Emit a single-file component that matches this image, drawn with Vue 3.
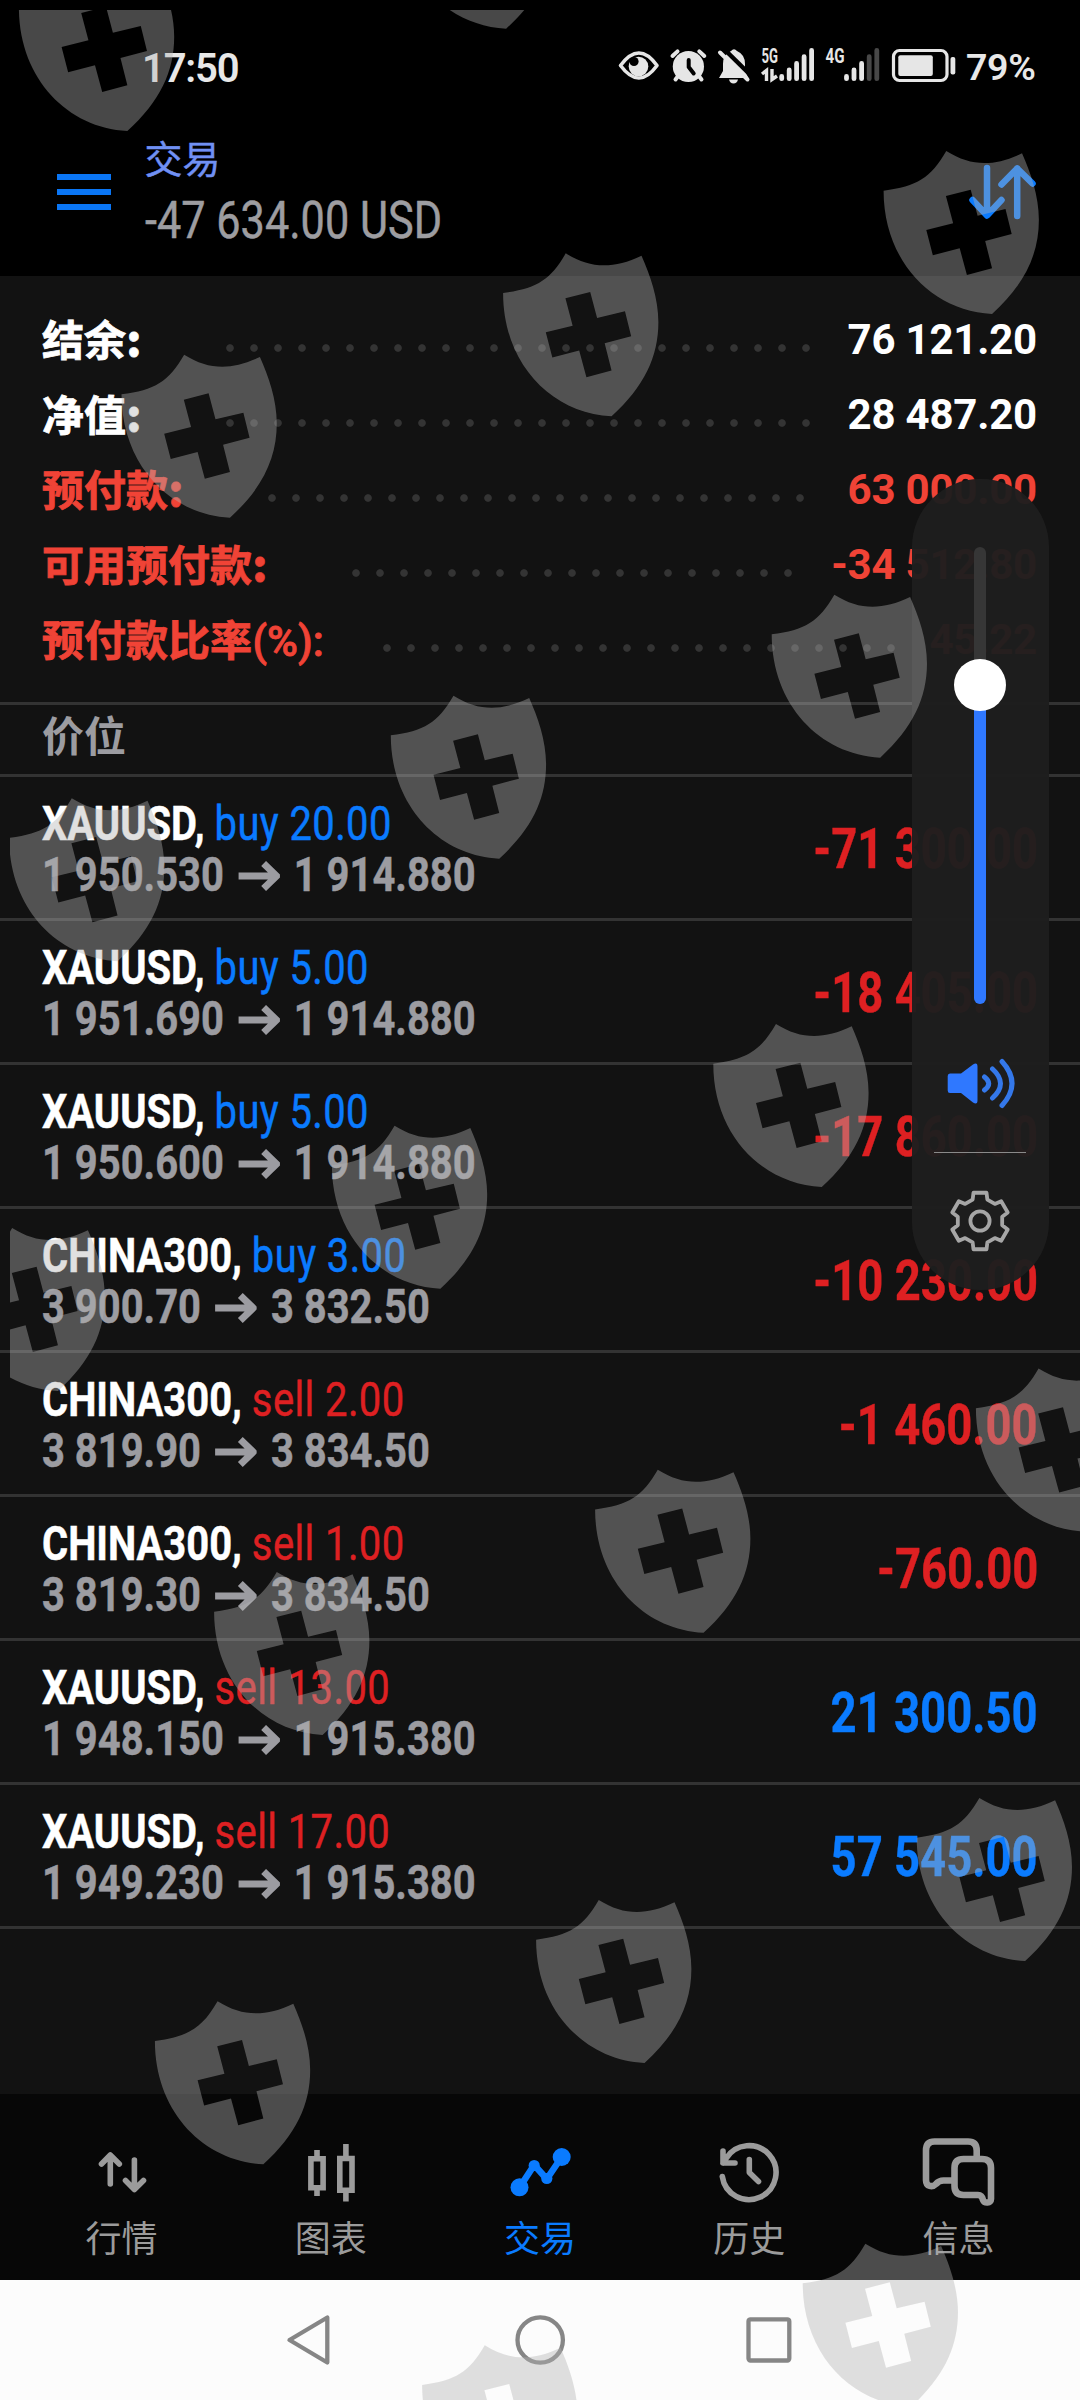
<script setup>
const summary = [
  { label: '结余', tail: ':', value: '76 121.20', lead: 176, dots: 25 },
  { label: '净值', tail: ':', value: '28 487.20', lead: 176, dots: 25 },
  { label: '预付款', tail: ':', value: '63 000.00', lead: 218, dots: 23, warn: true },
  { label: '可用预付款', tail: ':', value: '-34 512.80', lead: 302, dots: 19, warn: true },
  { label: '预付款比率', tail: '(%):', latin: true, value: '45.22', lead: 333, dots: 22, warn: true },
]

const positions = [
  { symbol: 'XAUUSD,', side: 'buy', volume: '20.00', open: '1 950.530', now: '1 914.880', profit: '-71 300.00' },
  { symbol: 'XAUUSD,', side: 'buy', volume: '5.00', open: '1 951.690', now: '1 914.880', profit: '-18 405.00' },
  { symbol: 'XAUUSD,', side: 'buy', volume: '5.00', open: '1 950.600', now: '1 914.880', profit: '-17 860.00' },
  { symbol: 'CHINA300,', side: 'buy', volume: '3.00', open: '3 900.70', now: '3 832.50', profit: '-10 230.00' },
  { symbol: 'CHINA300,', side: 'sell', volume: '2.00', open: '3 819.90', now: '3 834.50', profit: '-1 460.00' },
  { symbol: 'CHINA300,', side: 'sell', volume: '1.00', open: '3 819.30', now: '3 834.50', profit: '-760.00' },
  { symbol: 'XAUUSD,', side: 'sell', volume: '13.00', open: '1 948.150', now: '1 915.380', profit: '21 300.50' },
  { symbol: 'XAUUSD,', side: 'sell', volume: '17.00', open: '1 949.230', now: '1 915.380', profit: '57 545.00' },
]

// Watermark shields, anchored on the upper-left horn
const shields = [
  [81.6, -32], [460.4, -134.3], [946.3, 151], [565.8, 253.3], [184.2, 354.7],
  [834.4, 594.7], [453.5, 695.7], [71.8, 798.3], [776, 1024], [394.6, 1125.7],
  [12.2, 1228], [1038.6, 1368.6], [657.8, 1469.8], [276.8, 1572], [979.4, 1798],
  [598.8, 1900], [217.6, 2001.3], [865.4, 2243.7], [484.8, 2345.3],
]

const polar = (deg, r) => {
  const a = (deg * Math.PI) / 180
  return `${(r * Math.cos(a)).toFixed(2)},${(r * Math.sin(a)).toFixed(2)}`
}
const gear = [30, 90, 150, 210, 270, 330]
  .flatMap((t) => [polar(t - 19, 22.6), polar(t - 13, 29), polar(t + 13, 29), polar(t + 19, 22.6)])
  .join(' ')
</script>

<template>
  <div class="screen">
    <header class="top">
      <div class="status">
        <span class="clock">17:50</span>
        <svg class="status-icons" viewBox="616 36 342 60" width="342" height="60">
          <path d="M620.5 65.5Q639 40.5 657 65.5Q639 90.5 620.5 65.5Z" fill="none" stroke="#e6e6e6" stroke-width="3.6" stroke-linejoin="round" />
          <circle cx="638.5" cy="66.5" r="9.8" fill="#e6e6e6" />
          <circle cx="634" cy="61.5" r="4.6" fill="#000" />
          <circle cx="688.4" cy="66.5" r="15.6" fill="#e6e6e6" />
          <path d="M672.5 56l5-4.600M704.300 56l-5-4.600M675.500 79.500l3-4M701.500 79.500l-3-4" stroke="#e6e6e6" stroke-width="4" stroke-linecap="round" />
          <path d="M688.700 60v7l5 6.500" fill="none" stroke="#000" stroke-width="4" stroke-linecap="round" stroke-linejoin="round" />
          <path d="M731 51q3-3.500 6 0q8 3.500 8 13v7l3.500 7H719l4-7v-7q0-9.500 8-13Z" fill="#e6e6e6" />
          <path d="M729 79.500h9q-1 4-4.500 4t-4.500-4Z" fill="#e6e6e6" />
          <path d="M722 47L753 77.500" stroke="#000" stroke-width="4.500" />
          <path d="M720 52.500L747.500 79.500" stroke="#e6e6e6" stroke-width="4" stroke-linecap="round" />
          <text x="761.500" y="62.600" textLength="16.500" lengthAdjust="spacingAndGlyphs" class="net">5G</text>
          <text x="825.500" y="62.600" textLength="19" lengthAdjust="spacingAndGlyphs" class="net">4G</text>
          <path d="M762 74l4.500-3.500V81M772 69v10.500l5-3.500" fill="none" stroke="#e6e6e6" stroke-width="3.400" />
          <g stroke="#e6e6e6" stroke-width="4.800" stroke-linecap="round">
            <path d="M781.700 76.500V78.700M789.200 70V78.700M796.600 63.500V78.700M804.100 56.700V78.700M811.600 50.500V78.700" />
            <path d="M846.500 76.500V78.700M854 70V78.700M861.600 63.500V78.700" />
            <path d="M869.200 56.700V78.700M876.800 50.500V78.700" stroke="#484848" />
          </g>
          <rect x="893.500" y="50.500" width="53.500" height="30" rx="6" fill="none" stroke="#e6e6e6" stroke-width="3.200" />
          <rect x="898.300" y="55.200" width="34.500" height="20.700" rx="2" fill="#e6e6e6" />
          <rect x="950.500" y="57" width="4.800" height="17.500" rx="2" fill="#e6e6e6" />
        </svg>
        <span class="battery">79%</span>
      </div>
      <div class="appbar">
        <div class="menu"><i></i><i></i><i></i></div>
        <div class="titles">
          <div class="title">交易</div>
          <div class="balance">-47 634.00 USD</div>
        </div>
        <svg class="sort" viewBox="966 160 72 64" width="72" height="64">
          <path d="M987 168V215M972.500 200L987 215.500L1001.500 200M1017.200 216V168.500M1001.500 184.500L1017.200 168.500L1032.500 183.500" fill="none" stroke="#0a7bff" stroke-width="6.500" stroke-linecap="round" stroke-linejoin="round" />
        </svg>
      </div>
    </header>

    <main class="body">
      <section class="summary">
        <div v-for="row in summary" :key="row.label" class="sum-row" :class="{ warn: row.warn }">
          <span class="sum-label" :style="{ width: row.lead + 'px' }">{{ row.label }}<b :class="{ latin: row.latin }">{{ row.tail }}</b></span>
          <span class="leader" :style="{ width: row.dots * 24 + 'px' }"></span>
          <span class="sum-value">{{ row.value }}</span>
        </div>
      </section>
      <div class="section-head">价位</div>
      <section>
        <div v-for="(p, i) in positions" :key="i" class="pos">
          <div class="pos-info">
            <div class="line deal">{{ p.symbol }} <span :class="p.side">{{ p.side }} {{ p.volume }}</span></div>
            <div class="line price">{{ p.open }}<svg class="to" viewBox="0 0 42 30" width="50" height="30" preserveAspectRatio="none"><path d="M0 15H38M25.500 2.500L38.500 15L25.500 27.500" fill="none" stroke="#9c9ca1" stroke-width="7" /></svg>{{ p.now }}</div>
          </div>
          <div class="profit" :class="p.profit.startsWith('-') ? 'loss' : 'gain'">{{ p.profit }}</div>
        </div>
      </section>
    </main>

    <nav class="tabs">
      <div class="tab">
        <svg viewBox="81.500 2136 80 72" width="80" height="72"><path d="M109.800 2184V2156M101 2164L109.800 2155L118.800 2164M133.900 2160V2189M125 2180.500L133.900 2189.500L143 2180.500" class="s" stroke-linecap="round" stroke-linejoin="round" /></svg>
        <span>行情</span>
      </div>
      <div class="tab">
        <svg viewBox="290.500 2136 80 72" width="80" height="72"><path d="M310.400 2158.800H322.600V2187.800H310.400ZM316.500 2150V2157M316.500 2189V2196M339.300 2158.500H351.500V2190.300H339.300ZM345.400 2144V2157M345.400 2192V2201.500" class="s" /></svg>
        <span>图表</span>
      </div>
      <div class="tab on">
        <svg viewBox="499.500 2136 80 72" width="80" height="72"><path d="M519 2187.500L533.700 2165L546.300 2179L561.200 2157" class="s thick" stroke-linejoin="round" /><g fill="#0a7bff"><circle cx="519" cy="2187.300" r="9" /><circle cx="533.700" cy="2165.500" r="5.600" /><circle cx="546.300" cy="2178.500" r="5.600" /><circle cx="561.200" cy="2157" r="9" /></g></svg>
        <span>交易</span>
      </div>
      <div class="tab">
        <svg viewBox="708.500 2136 80 72" width="80" height="72"><path d="M721.800 2176.500A27 27 0 1 0 725.500 2158.500L722.500 2163M722.500 2151V2163H734.500M748.800 2159.500V2172.500L758 2181.500" class="s" stroke-linecap="round" stroke-linejoin="round" /></svg>
        <span>历史</span>
      </div>
      <div class="tab">
        <svg viewBox="917.500 2136 80 72" width="80" height="72"><path d="M976.200 2157V2150.500Q976.200 2141.500 967.500 2141.500H934Q925.500 2141.500 925.500 2150.500V2180C925.500 2187 932 2187.500 935.500 2184Q938.500 2180.500 943 2180.500H952M963 2159H981.500Q990.500 2159 990.500 2168V2199C990.500 2203.500 984 2203.500 982.500 2200Q981.500 2195 977.500 2195H963Q954 2195 954 2186V2168Q954 2159 963 2159Z" class="s thick" stroke-linejoin="round" /></svg>
        <span>信息</span>
      </div>
    </nav>

    <footer class="sysnav">
      <svg viewBox="280 2312 520 56" width="520" height="56" fill="none" stroke="#868686" stroke-width="4.300" stroke-linejoin="round">
        <path d="M289.500 2340L327.300 2317.500V2362.500Z" />
        <circle cx="540.200" cy="2340" r="22.700" />
        <rect x="748.500" y="2319.300" width="40.800" height="41.200" rx="2" />
      </svg>
    </footer>

    <aside class="volume">
      <div class="track"><div class="level"></div><div class="thumb"></div></div>
      <svg class="speaker" viewBox="943 1056 74 56" width="74" height="56">
        <path d="M950 1073.500H961L973 1064.500Q977.500 1062 977.500 1066.500V1100.500Q977.500 1105 973 1102.500L961 1093H950Q947.700 1093 947.700 1090.500V1076Q947.700 1073.500 950 1073.500Z" fill="#2f78ff" />
        <path d="M984.500 1077q8.500 6.500 0 13M992.500 1069q16 14.500 0 29M1002 1061.500q20 22 0 44" fill="none" stroke="#3478ea" stroke-width="5" stroke-linecap="round" />
      </svg>
      <div class="rule"></div>
      <svg class="gear" viewBox="-33 -33 66 66" width="66" height="66" fill="none" stroke="#a6a6a6" stroke-width="3.800" stroke-linejoin="round">
        <polygon :points="gear" />
        <circle r="9.600" />
      </svg>
    </aside>

    <svg class="marks" viewBox="10 10 1070 2390" width="1070" height="2390">
      <defs>
        <path id="shield" fill-rule="evenodd" d="M0 119C97 106 137 81 182 0C255 47 320 47 402 7C427 65 451 135 451 206C451 310 410 400 315 489C140 480 0 330 0 119ZM181 135L253 116L273 194L354 174L372 249L295 270L315 352L242 372L221 292L143 313L124 237L202 217Z" />
      </defs>
      <use v-for="([x, y], i) in shields" :key="i" href="#shield" :transform="`translate(${x - 62.7} ${y}) scale(.3443 .3333)`" fill="#b2b2b2" fill-opacity=".405" />
    </svg>
  </div>
</template>

<style>
body {
  background: #121212;
}
</style>

<style scoped>
.screen {
  position: relative;
  display: flex;
  flex-direction: column;
  width: 1080px;
  height: 2400px;
  overflow: hidden;
  background: #121212;
  font-family: Roboto, "Noto Sans CJK SC", sans-serif;
  color: #fff;
}
.top {
  height: 276px;
  background: #000;
}
.status {
  display: flex;
  align-items: center;
  height: 132px;
  padding: 0 43px 0 142px;
  box-sizing: border-box;
  color: #e8e8e8;
}
.clock {
  flex: 1;
  padding-top: 4px;
  font-size: 40px;
  font-weight: 600;
  letter-spacing: -1.200px;
}
.battery {
  width: 71px;
  margin-left: 8px;
  padding-top: 2px;
  font-size: 37.500px;
  font-weight: 600;
  letter-spacing: -0.300px;
}
.net {
  font: 700 20px Roboto, sans-serif;
  fill: #e6e6e6;
}
.appbar {
  display: flex;
  height: 144px;
  padding: 0 42px 0 57px;
}
.menu {
  display: flex;
  flex-direction: column;
  gap: 9px;
  width: 87.500px;
  padding-top: 42px;
}
.menu i {
  width: 54px;
  height: 6px;
  background: #0a76f5;
}
.titles {
  flex: 1;
  padding-top: 2px;
}
.title {
  height: 57px;
  font-size: 38px;
  line-height: 53px;
  color: #7090f4;
  -webkit-text-stroke: 0.400px currentColor;
}
.balance {
  height: 60px;
  font-size: 51px;
  line-height: 60px;
  color: #9d9da1;
  transform: scaleX(0.848);
  transform-origin: 0 0;
  white-space: nowrap;
  -webkit-text-stroke: 0.500px currentColor;
}
.sort {
  margin-top: 28px;
}
.body {
  height: 1818px;
}
.summary {
  height: 429px;
  padding: 26px 43px 0 42px;
  box-sizing: border-box;
  border-bottom: 3px solid #333;
}
.sum-row {
  display: flex;
  align-items: center;
  height: 75px;
  font-size: 42px;
  font-weight: 700;
  white-space: nowrap;
}
.sum-row.warn {
  color: #f04336;
}
.sum-label {
  height: 64px;
  font-family: "Noto Sans CJK SC", sans-serif;
  line-height: 60px;
  -webkit-text-stroke: 0.800px currentColor;
}
.sum-label b {
  margin-left: 0.500px;
}
.sum-label .latin {
  font-family: Roboto, sans-serif;
  font-weight: 500;
}
.leader {
  height: 8px;
  margin-top: 17px;
  background: radial-gradient(circle at 50% 50%, #343434 3.300px, transparent 4.200px) 0 0 / 24px 8px;
}
.sum-value {
  flex: 1;
  letter-spacing: -0.200px;
  text-align: right;
}
.section-head {
  height: 72px;
  padding-left: 42px;
  box-sizing: border-box;
  border-bottom: 3px solid #333;
  font: 700 42px/57px "Noto Sans CJK SC", sans-serif;
  color: #9c9ca1;
}
.pos {
  display: flex;
  justify-content: space-between;
  height: 144px;
  padding: 21px 42px 0 42px;
  box-sizing: border-box;
  border-bottom: 3px solid #333;
}
.line {
  height: 51px;
  font-size: 48px;
  font-weight: 700;
  line-height: 51px;
  transform-origin: 0 0;
  white-space: nowrap;
  -webkit-text-stroke: 0.500px currentColor;
}
.pos-info {
  width: 480px;
}
.deal {
  transform: scaleX(0.832);
}
.deal span {
  font-weight: 400;
  letter-spacing: 0.500px;
}
.buy,
.gain {
  color: #0a7bff;
}
.sell,
.loss {
  color: #de2022;
}
.price {
  color: #9c9ca1;
  transform: scaleX(0.832);
}
.to {
  margin: 0 17px;
}
.profit {
  font-size: 55px;
  font-weight: 700;
  line-height: 102px;
  transform: scaleX(0.826);
  transform-origin: 100% 0;
  white-space: nowrap;
  -webkit-text-stroke: 0.400px currentColor;
}
.tabs {
  display: flex;
  height: 186px;
  padding: 0 17px;
  box-sizing: border-box;
  background: #070707;
}
.tab {
  display: flex;
  flex: 1;
  flex-direction: column;
  align-items: center;
  padding-top: 42px;
  font: 400 36px/56px "Noto Sans CJK SC", sans-serif;
  color: #9b9b9b;
}
.tab.on {
  color: #0a7bff;
}
.s {
  fill: none;
  stroke: currentColor;
  stroke-width: 5.600px;
}
.thick {
  stroke-width: 6.600px;
}
.sysnav {
  display: flex;
  justify-content: center;
  height: 120px;
  padding-top: 32px;
  box-sizing: border-box;
  background: #fcfcfc;
}
.volume {
  position: absolute;
  left: 911.500px;
  top: 479px;
  display: flex;
  flex-direction: column;
  align-items: center;
  width: 137px;
  height: 811px;
  padding-top: 68px;
  box-sizing: border-box;
  border-radius: 68px;
  background: rgba(30, 30, 30, 0.965);
}
.track {
  position: relative;
  width: 12px;
  height: 457px;
  border-radius: 6px;
  background: #363636;
}
.level {
  position: absolute;
  inset: 138px 0 0;
  border-radius: 6px;
  background: #2f78ff;
}
.thumb {
  position: absolute;
  left: -20px;
  top: 112px;
  width: 52px;
  height: 52px;
  border-radius: 50%;
  background: #fff;
}
.speaker {
  margin-top: 52px;
}
.rule {
  width: 92px;
  height: 1px;
  margin-top: 40px;
  background: #8a8a8a;
}
.gear {
  margin-top: 35px;
}
.marks {
  position: absolute;
  left: 10px;
  top: 10px;
  overflow: hidden;
}
</style>
